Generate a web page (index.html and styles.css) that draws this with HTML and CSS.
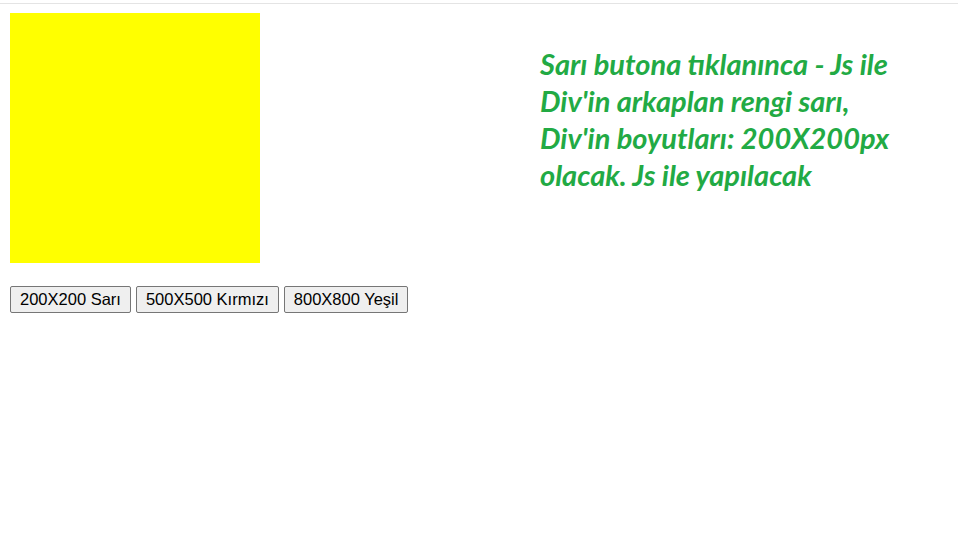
FILE: index.html
```html
<!DOCTYPE html>
<html lang="tr">
<head>
<meta charset="utf-8">
<title>Div</title>
<link rel="stylesheet" href="styles.css">
</head>
<body>
<div class="topline"></div>
<div class="page">
  <div class="left">
    <div class="box"></div>
    <div class="buttons">
      <button class="btn">200X200 Sarı</button>
      <button class="btn">500X500 Kırmızı</button>
      <button class="btn">800X800 Yeşil</button>
    </div>
  </div>
  <p class="note">Sarı butona tıklanınca - Js ile<br>Div'in arkaplan rengi sarı,<br>Div'in boyutları: 200X200px<br>olacak. Js ile yapılacak</p>
</div>
</body>
</html>
```
FILE: styles.css
```css
html, body {
  margin: 0;
  padding: 0;
  background: #ffffff;
}
.topline {
  margin-top: 3px;
  height: 1px;
  background: #e4e4e4;
}
.page {
  display: flex;
  align-items: flex-start;
  padding: 9px 10px 0 10px;
}
.left {
  display: flex;
  flex-direction: column;
  width: 530px;
  flex: none;
}
.box {
  width: 250px;
  height: 250px;
  background: #ffff00;
}
.buttons {
  display: flex;
  gap: 5px;
  margin-top: 23px;
}
.btn {
  font-family: "Liberation Sans", Arial, sans-serif;
  font-size: 16.5px;
  color: #000;
  background: #efefef;
  border: 1px solid #767676;
  border-radius: 2px;
  padding: 3px 9px;
  line-height: 19px;
  height: 27px;
}
.note {
  margin: 32px 0 0 0;
  font-family: Lato, "Open Sans", sans-serif;
  font-weight: bold;
  font-style: italic;
  font-size: 29px;
  line-height: 37px;
  color: #22aa44;
  white-space: nowrap;
}
```
